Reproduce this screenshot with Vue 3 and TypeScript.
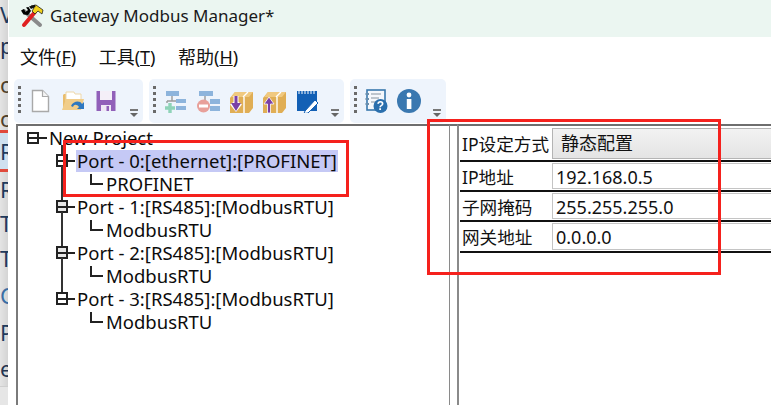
<script setup lang="ts">
const stripRows = [
  { t: 'V', h: 28, c: '#1f3a5c' },
  { t: 'p', h: 34, c: '#223350' },
  { t: 'o', h: 43, c: '#4f4029' },
  { t: 'o', h: 25, c: '#4f4029' },
]
const stripRows2 = [
  { t: 'R', h: 34, c: '#1f3a5c' },
  { t: 'T', h: 34, c: '#1f3a5c' },
  { t: 'T', h: 35, c: '#1f3a5c' },
  { t: 'C', h: 39, c: '#3a6ea5' },
  { t: 'Pr', h: 36, c: '#1f3a5c' },
  { t: 'e', h: 36, c: '#223350' },
]
const ports = [
  { name: 'Port - 0:[ethernet]:[PROFINET]', child: 'PROFINET', sel: true, dim: false },
  { name: 'Port - 1:[RS485]:[ModbusRTU]', child: 'ModbusRTU', sel: false, dim: true },
  { name: 'Port - 2:[RS485]:[ModbusRTU]', child: 'ModbusRTU', sel: false, dim: true },
  { name: 'Port - 3:[RS485]:[ModbusRTU]', child: 'ModbusRTU', sel: false, dim: false },
]
const props = [
  { label: 'IP设定方式', value: '静态配置', combo: true },
  { label: 'IP地址', value: '192.168.0.5', combo: false },
  { label: '子网掩码', value: '255.255.255.0', combo: false },
  { label: '网关地址', value: '0.0.0.0', combo: false },
]
const menus = [
  { t: '文件(', k: 'F' },
  { t: '工具(', k: 'T' },
  { t: '帮助(', k: 'H' },
]
</script>

<template>
  <div class="root">
    <aside class="strip">
      <div v-for="(r, i) in stripRows" :key="'a' + i" class="sl" :style="{ height: r.h + 'px', color: r.c }">{{ r.t }}</div>
      <div class="sel-row"><span class="sl-r">R</span></div>
      <div v-for="(r, i) in stripRows2" :key="'b' + i" class="sl" :style="{ height: r.h + 'px', color: r.c }">{{ r.t }}</div>
      <div class="strip-foot"></div>
    </aside>

    <main class="win">
      <header class="title">
        <svg class="appicon" width="24" height="24" viewBox="0 0 24 24">
          <path d="M4 7 L20 21" stroke="#8a8a8a" stroke-width="4" stroke-linecap="round" />
          <path d="M1 6.5 L4 5 L5.5 8 L8 6 L6 3.5 L8.5 3 L11 7 L8 11 L3.5 10.5 Z" fill="#000" />
          <path d="M4 21 L15 8" stroke="#e02020" stroke-width="4" stroke-linecap="round" />
          <path d="M11 2 L16 1 L23 6 L22 10 L18 7 L15 10 L12 7 L14 4 Z" fill="#f2d21b" stroke="#222" stroke-width=".8" />
          <path d="M9 2.5 L15 .8 L15.5 3 L11 5 Z" fill="#111" />
        </svg>
        <span class="title-text">Gateway Modbus Manager*</span>
      </header>

      <nav class="menu">
        <span v-for="m in menus" :key="m.k" class="menu-item">{{ m.t }}<u>{{ m.k }}</u>)</span>
      </nav>

      <div class="toolbars">
        <div class="tb">
          <i class="grip"></i>
          <div class="icons">
            <svg class="ic" viewBox="0 0 24 24">
              <path d="M4.5 1.5 H14.5 L20.5 7.5 V22.5 H4.5 Z" fill="#fff" stroke="#a9a9a9" stroke-width="1.4" />
              <path d="M14.5 1.5 V7.5 H20.5" fill="#f4f4f4" stroke="#a9a9a9" stroke-width="1.2" />
            </svg>
            <svg class="ic" viewBox="0 0 24 24">
              <path d="M2 6 V20 H17 V8 H10 L8 5 H3 Z" fill="#e9bd6d" />
              <path d="M5 3 H13 L14 5 H20 V12 H5 Z" fill="#fff" stroke="#eed7a8" />
              <path d="M1 21 L5 10 H23 L20 21 Z" fill="#f1cd8a" />
              <path d="M10 17 C12 12 19 11 21 15 L23 13 V20 H16 L18 18 C16 15 13 15 12 18 Z" fill="#2f78c0" />
            </svg>
            <svg class="ic" viewBox="0 0 24 24">
              <path d="M2.5 2 H21.5 V22 H2.5 Z" fill="#9160b9" />
              <path d="M6 2 H18 V11 H6 Z" fill="#f4eff8" />
              <path d="M7 16 H17 V22 H7 Z" fill="#efe8f5" />
              <path d="M12.5 17 H15 V22 H12.5 Z" fill="#9160b9" />
            </svg>
          </div>
          <i class="more"></i>
        </div>

        <div class="tb">
          <i class="grip"></i>
          <div class="icons">
            <svg class="ic" viewBox="0 0 24 24">
              <rect x="3" y="2" width="13" height="5" fill="#8db4dc" />
              <path d="M9 7 V12 H4 M4 12 V14 M9 12 H13" stroke="#9a9a9a" stroke-width="1.4" fill="none" />
              <rect x="13" y="10" width="10" height="4" fill="#8db4dc" />
              <rect x="13" y="17" width="10" height="4" fill="#8db4dc" />
              <path d="M7 14 V24 M2 19 H12" stroke="#8fd3b8" stroke-width="3.4" />
            </svg>
            <svg class="ic" viewBox="0 0 24 24">
              <rect x="3" y="2" width="14" height="5" fill="#8db4dc" />
              <path d="M9 7 V12" stroke="#9a9a9a" stroke-width="1.4" />
              <rect x="14" y="10" width="10" height="5" fill="#8db4dc" />
              <rect x="14" y="17" width="10" height="5" fill="#8db4dc" />
              <circle cx="7.5" cy="17" r="6.5" fill="#e8a09a" />
              <rect x="3" y="15.5" width="9" height="3" fill="#fff" />
            </svg>
            <svg class="ic" viewBox="0 0 24 24">
              <path d="M1 9 L6 3 H24 V19 L20 24 H1 Z" fill="#e0ae55" />
              <path d="M6 3 H24 L20 8 H2 Z" fill="#f0c980" />
              <path d="M14 8 L19 3 M15 8 V24" stroke="#fff" stroke-width="1.4" />
              <path d="M7 7 V16 M3 14 L7 19 L11 14" fill="none" stroke="#fff" stroke-width="5" />
              <path d="M5.5 7 H8.5 V14 H12 L7 22 L2 14 H5.5 Z" fill="#7b3fa6" />
            </svg>
            <svg class="ic" viewBox="0 0 24 24">
              <path d="M1 9 L6 3 H24 V19 L20 24 H1 Z" fill="#e0ae55" />
              <path d="M6 3 H24 L20 8 H2 Z" fill="#f0c980" />
              <path d="M14 8 L19 3 M15 8 V24" stroke="#fff" stroke-width="1.4" />
              <path d="M5.5 24 V15 H2 L7 8 L12 15 H8.5 V24 Z" fill="#7b3fa6" stroke="#fff" stroke-width=".8" />
            </svg>
            <svg class="ic" viewBox="0 0 24 24">
              <rect x="2" y="2" width="20" height="20" fill="#1360b5" />
              <path d="M4 1 V5 M7 1 V5 M10 1 V5 M13 1 V5 M16 1 V5 M19 1 V5" stroke="#fff" stroke-width="1" />
              <path d="M10 22 L20 11 L23 14 L13 24 L9 24.5 Z" fill="#fff" stroke="#1360b5" stroke-width="1" />
            </svg>
          </div>
          <i class="more"></i>
        </div>

        <div class="tb">
          <i class="grip"></i>
          <div class="icons">
            <svg class="ic" viewBox="0 0 24 24">
              <rect x="3" y="1" width="18" height="20" fill="#f5f8fc" stroke="#3a79ad" stroke-width="1.6" />
              <path d="M1.5 5 H5 M1.5 10 H5 M1.5 15 H5" stroke="#6b8fad" stroke-width="2" />
              <path d="M7 5 H17 M7 9 H15 M7 13 H12" stroke="#aab4bd" stroke-width="1.4" />
              <circle cx="16.5" cy="17" r="7" fill="#2a6fad" />
              <text x="16.5" y="21" text-anchor="middle" class="qm">?</text>
            </svg>
            <svg class="ic" viewBox="0 0 24 24">
              <circle cx="12" cy="12" r="12" fill="#3a78b0" />
              <circle cx="12" cy="6" r="2.4" fill="#fff" />
              <rect x="9.8" y="10" width="4.6" height="10" fill="#fff" />
            </svg>
          </div>
          <i class="more"></i>
        </div>
      </div>

      <section class="panes">
        <div class="tree">
          <div class="row root-row">
            <span class="box"><i class="line"></i></span>
            <span class="label">New Project</span>
          </div>
          <template v-for="p in ports" :key="p.name">
            <div class="row port-row">
              <span class="box small" :class="{ dim: p.dim }"><i class="line"></i></span>
              <span class="label" :class="{ sel: p.sel }">{{ p.name }}</span>
            </div>
            <div class="row child-row" :class="{ through: p !== ports[3] }">
              <i class="elbow"></i>
              <span class="label">{{ p.child }}</span>
            </div>
          </template>
        </div>
        <div class="split"></div>
        <div class="grid-pane">
          <div v-for="(r, i) in props" :key="r.label" class="prop" :class="{ first: i === 0 }">
            <span class="prop-label">{{ r.label }}</span>
            <span class="prop-value" :class="{ combo: r.combo }">{{ r.value }}</span>
          </div>
        </div>
      </section>
    </main>

    <div class="mark mark-left"></div>
    <div class="mark mark-right"></div>
  </div>
</template>

<style>
html, body { margin: 0; overflow: hidden; background: #fff; }
</style>

<style scoped>
.root {
  position: relative;
  display: flex;
  width: 771px;
  height: 405px;
  overflow: hidden;
  background: #fff;
  font-family: "Noto Sans", "Noto Sans CJK SC", sans-serif;
  color: #111;
}
.strip {
  width: 8px;
  flex: none;
  background: linear-gradient(90deg, #e4e4e4, #d4d4d4);
  overflow: hidden;
  margin-right: 1px;
  font-size: 22px;
  display: flex;
  flex-direction: column;
}
.sl {
  flex: none;
  line-height: 1;
  display: flex;
  align-items: center;
  width: 24px;
}
.sel-row {
  flex: none;
  height: 42px;
  display: flex;
  align-items: center;
  background: #cfe0ef;
  border-top: 3px solid #e04a3c;
  border-bottom: 3px solid #e04a3c;
  box-sizing: border-box;
  color: #1f3a5c;
}
.sl-r { line-height: 1; }
.strip-foot { flex: 1; background: #e6e6e6; border-top: 1px solid #cfcfcf; }

.win {
  flex: 1;
  min-width: 0;
  display: flex;
  flex-direction: column;
}
.title {
  height: 37px;
  flex: none;
  display: flex;
  align-items: center;
  padding-left: 11px;
  background: #ebf6f1;
}
.appicon { flex: none; margin-right: 6px; margin-top: -5px; }
.title-text { font-size: 17px; margin-top: -6px; color: #1a1a1a; }

.menu {
  height: 37px;
  flex: none;
  display: flex;
  align-items: center;
  padding: 0 0 4px 11px;
  gap: 22.5px;
  font-size: 18px;
}
.menu-item { white-space: nowrap; }

.toolbars {
  height: 46px;
  flex: none;
  display: flex;
  gap: 6px;
  padding-left: 5px;
  box-sizing: border-box;
  padding-top: 1px;
}
.tb {
  height: 44px;
  display: flex;
  align-items: center;
  background: #eef4fc;
  border-radius: 5px;
  padding-left: 4px;
  padding-right: 3px;
}
.grip {
  width: 3px;
  height: 30px;
  flex: none;
  background: repeating-linear-gradient(180deg, #6a6a6a 0 3px, transparent 3px 6px);
  margin-right: 7px;
}
.icons { display: flex; gap: 9px; }
.ic { width: 24px; height: 24px; flex: none; filter: blur(0.35px); }
.qm { font-size: 12px; font-weight: 700; fill: #fff; font-family: "Liberation Sans", sans-serif; }
.more {
  position: relative;
  width: 12px;
  height: 44px;
  flex: none;
  margin-left: 10px;
}
.more::before {
  content: "";
  position: absolute;
  left: 2px;
  top: 30px;
  width: 8px;
  height: 2px;
  background: #777;
}
.more::after {
  content: "";
  position: absolute;
  left: 2px;
  top: 34px;
  border-left: 4px solid transparent;
  border-right: 4px solid transparent;
  border-top: 4px solid #666;
}

.panes {
  flex: 1;
  min-height: 0;
  display: flex;
  padding-left: 7px;
}
.tree {
  width: 431px;
  flex: none;
  border-left: 2px solid #7a7a7a;
  border-top: 2px solid #6e6e6e;
  font-size: 18.5px;
}
.row {
  position: relative;
  height: 23px;
  display: flex;
  align-items: center;
  white-space: nowrap;
}
.label { line-height: 22px; height: 22px; color: #0c0c0c; }
.label.sel { background: #c5c9f5; padding: 0 1px; margin-left: -1px; }
.box {
  position: relative;
  width: 12px;
  height: 12px;
  flex: none;
  box-sizing: border-box;
  border: 2px solid #222;
  background: #fff;
}
.line {
  position: absolute;
  left: 0;
  right: -10px;
  top: 3px;
  height: 2px;
  background: #222;
}
.root-row { padding-left: 9px; }
.root-row .box { margin-right: 10px; }
.port-row { padding-left: 38px; }
.port-row .box { width: 12px; height: 13px; margin-right: 9px; }
.port-row .line { top: 3.5px; right: -9px; }
.port-row .box.dim { background: #e6e6e6; }
.port-row::before {
  content: "";
  position: absolute;
  left: 43px;
  top: -4px;
  width: 2px;
  height: 10px;
  background: #333;
}
.child-row { padding-left: 88px; }
.child-row.through::before {
  content: "";
  position: absolute;
  left: 43px;
  top: -6px;
  width: 2px;
  height: 33px;
  background: #333;
}
.elbow {
  position: absolute;
  left: 72px;
  top: 2px;
  width: 11px;
  height: 9px;
  border-left: 2px solid #222;
  border-bottom: 2px solid #222;
}

.split { width: 8px; flex: none; border-top: 2px solid #6e6e6e; border-left: 1px solid #8a8a8a; box-sizing: border-box; }
.grid-pane {
  flex: 1;
  min-width: 0;
  border-left: 2px solid #8a8a8a;
  border-top: 2px solid #6e6e6e;
  padding-left: 1px;
  padding-top: 1px;
  font-size: 17.6px;
}
.prop {
  display: flex;
  height: 27px;
  padding-top: 1px;
  border-bottom: 2px solid #111;
  box-sizing: content-box;
  white-space: nowrap;
}
.prop.first { height: 32px; }
.prop:last-child { height: 28px; }
.prop-label {
  width: 90px;
  flex: none;
  line-height: 28px;
  padding-left: 2px;
}
.prop.first .prop-label { line-height: 32px; }
.prop-value {
  flex: 1;
  box-sizing: border-box;
  margin-bottom: 1px;
  border: 1.5px solid #c4c4c4;
  border-right: none;
  padding-left: 3px;
  font-size: 18px;
  line-height: 26px;
  background: #fff;
}
.prop-value.combo {
  padding-left: 8px;
  line-height: 28px;
  border-color: #b4b4b4;
  background: linear-gradient(180deg, #f2f2f2, #e4e4e4);
}

.mark {
  position: absolute;
  box-sizing: border-box;
  border: 3px solid #f5211d;
  pointer-events: none;
}
.mark-left { left: 63px; top: 140px; width: 286px; height: 57px; }
.mark-right { left: 427px; top: 119px; width: 294px; height: 156px; }
</style>
